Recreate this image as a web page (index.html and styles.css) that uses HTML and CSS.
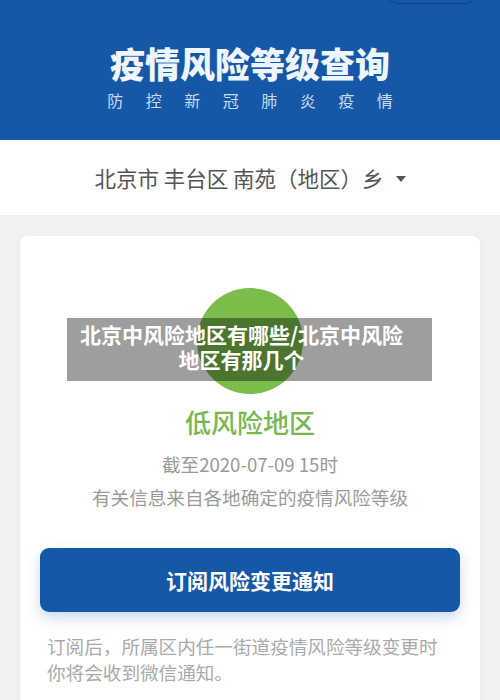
FILE: index.html
```html
<!DOCTYPE html>
<html lang="zh-CN">
<head>
    <meta charset="UTF-8">
    <meta name="viewport" content="width=device-width, initial-scale=1.0">
    <title>疫情风险等级查询</title>
    <link rel="stylesheet" href="styles.css">
</head>
<body>
    <header class="header">
        <span class="capsule"></span>
        <h1 class="header-title">疫情风险等级查询</h1>
        <p class="header-sub">防控新冠肺炎疫情</p>
    </header>

    <div class="region-bar">
        <span class="region-text">北京市 丰台区 南苑（地区）乡</span>
        <span class="region-arrow"></span>
    </div>

    <main class="page">
        <section class="card">
            <div class="level-circle"></div>
            <div class="caption">北京中风险地区有哪些/北京中风险<br>地区有那几个</div>
            <h2 class="level-name">低风险地区</h2>
            <p class="info">截至2020-07-09 15时</p>
            <p class="info">有关信息来自各地确定的疫情风险等级</p>
            <button class="subscribe-btn">订阅风险变更通知</button>
            <p class="note">订阅后，所属区内任一街道疫情风险等级变更时<br>你将会收到微信通知。</p>
        </section>
    </main>
</body>
</html>
```

FILE: styles.css
```css
:root {
    --blue: #1658a8;
    --green: #7abd4b;
    --green-text: #78b84e;
    --grey-text: #9a9a9a;
    --page-bg: #f0f1f3;
}

body {
    margin: 0;
    padding: 0;
    width: 500px;
    height: 700px;
    overflow: hidden;
    background-color: var(--page-bg);
    font-family: 'Noto Sans CJK SC', 'Noto Sans', sans-serif;
}

.header {
    position: relative;
    height: 140px;
    background-color: var(--blue);
    display: flex;
    flex-direction: column;
    align-items: center;
    box-sizing: border-box;
    padding-top: 39px;
}

.capsule {
    position: absolute;
    top: -30px;
    right: 20px;
    width: 95px;
    height: 32px;
    border-radius: 16px;
    border: 1px solid rgba(0, 0, 0, 0.25);
}

.header-title {
    margin: 0;
    font-size: 35px;
    line-height: 48px;
    font-weight: 900;
    color: #eef5fd;
}

.header-sub {
    margin: 2px -22.5px 0 0;
    font-size: 16px;
    line-height: 22px;
    color: #c6dbf2;
    letter-spacing: 22.5px;
}

.region-bar {
    height: 75px;
    background-color: #fff;
    display: flex;
    align-items: center;
    justify-content: center;
    gap: 12px;
    color: #555;
    font-size: 21.5px;
}

.region-arrow {
    width: 0;
    height: 0;
    border-left: 5px solid transparent;
    border-right: 5px solid transparent;
    border-top: 6px solid #555;
    margin-top: 2px;
}

.page {
    padding: 21px 20px 0;
}

.card {
    position: relative;
    background-color: #fff;
    border-radius: 8px;
    box-shadow: 0 1px 4px rgba(0, 0, 0, 0.04);
    display: flex;
    flex-direction: column;
    align-items: center;
    padding: 52px 20px 40px;
    height: 500px;
    box-sizing: border-box;
}

.level-circle {
    width: 106px;
    height: 106px;
    border-radius: 50%;
    background-color: var(--green);
}

.caption {
    position: absolute;
    top: 82px;
    left: 47px;
    width: 365px;
    height: 63px;
    box-sizing: border-box;
    padding: 4px 22px 0 6px;
    background-color: rgba(0, 0, 0, 0.38);
    color: #fff;
    font-size: 21px;
    font-weight: 700;
    line-height: 25px;
    text-align: center;
}

.level-name {
    margin: 10px 0 0 0;
    font-size: 26px;
    line-height: 36px;
    font-weight: 500;
    color: var(--green-text);
}

.info {
    margin: 12px 0 0 0;
    font-size: 18.6px;
    line-height: 24px;
    color: var(--grey-text);
}

.info + .info {
    margin-top: 9px;
}

.subscribe-btn {
    margin-top: 39px;
    width: 420px;
    height: 64px;
    border: none;
    border-radius: 9px;
    background-color: var(--blue);
    color: #fff;
    font-family: inherit;
    font-size: 21px;
    font-weight: 700;
    box-shadow: 0 6px 14px rgba(22, 88, 168, 0.22);
}

.note {
    align-self: stretch;
    margin: 21px 0 0 7px;
    font-size: 18.6px;
    line-height: 26px;
    color: #aaa;
}
```
